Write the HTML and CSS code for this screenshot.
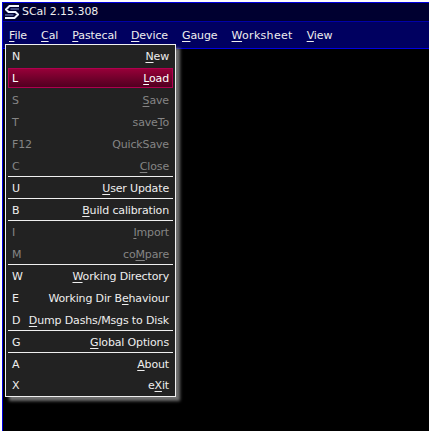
FILE: index.html
```html
<!DOCTYPE html>
<html lang="en">
<head>
<meta charset="utf-8">
<title>SCal 2.15.308</title>
<link rel="stylesheet" href="styles.css">
</head>
<body>
<div class="window">
  <header class="titlebar">
    <svg class="logo" width="14" height="14" viewBox="0 0 14 14" aria-hidden="true">
      <path class="logo-outer" d="M14 1H4.500L1 4.500 3.500 7H10.500L13 9.500 9.500 13H0"/>
      <path class="logo-inner" d="M14 4H5.500M0 10H8.500"/>
    </svg>
    <span>SCal 2.15.308</span>
  </header>
  <nav class="menubar">
    <span class="menubar-item"><u>F</u>ile</span>
    <span class="menubar-item"><u>C</u>al</span>
    <span class="menubar-item"><u>P</u>astecal</span>
    <span class="menubar-item"><u>D</u>evice</span>
    <span class="menubar-item"><u>G</u>auge</span>
    <span class="menubar-item wide"><u>W</u>orksheet</span>
    <span class="menubar-item"><u>V</u>iew</span>
  </nav>
  <main class="canvas">
    <div class="menu">
      <div class="item"><span>N</span><span><u>N</u>ew</span></div>
      <div class="item active"><span>L</span><span><u>L</u>oad</span></div>
      <div class="item off"><span>S</span><span><u>S</u>ave</span></div>
      <div class="item off"><span>T</span><span>save<u>T</u>o</span></div>
      <div class="item off"><span>F12</span><span>QuickSave</span></div>
      <div class="item off sep"><span>C</span><span><u>C</u>lose</span></div>
      <div class="item sep"><span>U</span><span><u>U</u>ser Update</span></div>
      <div class="item sep"><span>B</span><span><u>B</u>uild calibration</span></div>
      <div class="item off"><span>I</span><span><u>I</u>mport</span></div>
      <div class="item off sep"><span>M</span><span>co<u>M</u>pare</span></div>
      <div class="item"><span>W</span><span><u>W</u>orking Directory</span></div>
      <div class="item"><span>E</span><span>Working Dir B<u>e</u>haviour</span></div>
      <div class="item sep"><span>D</span><span><u>D</u>ump Dashs/Msgs to Disk</span></div>
      <div class="item sep"><span>G</span><span><u>G</u>lobal Options</span></div>
      <div class="item"><span>A</span><span><u>A</u>bout</span></div>
      <div class="item last"><span>X</span><span>e<u>X</u>it</span></div>
    </div>
  </main>
</div>
</body>
</html>
```
FILE: styles.css
```css
html, body {
  margin: 0;
  padding: 0;
  background: #fff;
}
body {
  width: 433px;
  height: 434px;
  overflow: hidden;
  font-family: "DejaVu Sans", sans-serif;
  font-size: 11px;
  color: #eee;
}
u {
  text-underline-offset: 2px;
}
.window {
  box-sizing: border-box;
  width: 427px;
  height: 429px;
  margin: 2px 0 0 2px;
  border-top: 1px solid #0000e0;
  border-left: 1px solid #0000e0;
  display: flex;
  flex-direction: column;
  background: #000;
}
.titlebar {
  height: 18px;
  flex: none;
  display: flex;
  align-items: center;
  gap: 3px;
  padding-left: 2px;
  background: #000030;
  border-bottom: 1px solid #0000a8;
  line-height: 18px;
  letter-spacing: -0.05px;
}
.logo-outer {
  fill: none;
  stroke: #f0f4ff;
  stroke-width: 2;
}
.logo-inner {
  fill: none;
  stroke: #8090d0;
  stroke-width: 1;
}
.menubar {
  height: 26px;
  flex: none;
  display: flex;
  align-items: center;
  gap: 14px;
  padding-left: 6px;
  background: #000060;
  border-bottom: 1px solid #0000e0;
  letter-spacing: -0.1px;
}
.wide {
  letter-spacing: 0.3px;
}
.canvas {
  flex: 1;
  position: relative;
  background: #000;
}
.menu {
  position: absolute;
  left: 2px;
  top: -5px;
  width: 169px;
  border: 1px solid #f0f0f0;
  background: #222;
  box-shadow: 4px 4px 3px #707070;
  letter-spacing: -0.15px;
}
.item {
  height: 22px;
  box-sizing: border-box;
  margin: 0 2px;
  padding: 0 4px;
  display: flex;
  align-items: center;
  justify-content: space-between;
}
.active {
  height: 20px;
  margin-top: 1px;
  margin-bottom: 1px;
  padding: 0 3px;
  background: linear-gradient(#960038, #500020);
  border: 1px solid #b00050;
  color: #fff;
}
.off {
  color: #858585;
}
.sep {
  border-bottom: 1px solid #f0f0f0;
  padding-top: 1px;
}
.last {
  height: 21px;
}
```
